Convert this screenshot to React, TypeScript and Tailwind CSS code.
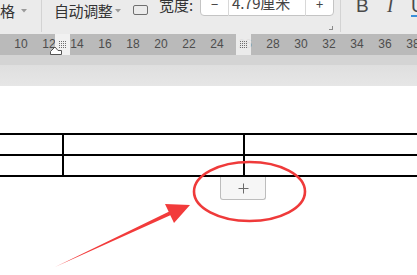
import React from "react";

const cjk = "font-['Noto_Sans_CJK_SC','Noto_Sans',sans-serif]";

function Grid() {
  const dots = [];
  for (let r = 0; r < 4; r++)
    for (let c = 0; c < 4; c++)
      dots.push(<rect key={`${r}-${c}`} x={c * 2} y={r * 2} width="1" height="1" fill="#6e6e6e" />);
  return (
    <svg width="7" height="7" viewBox="0 0 7 7">
      {dots}
    </svg>
  );
}

function Caret() {
  return (
    <svg width="6" height="4" viewBox="0 0 6 4">
      <polygon points="0,0 6,0 3,3.5" fill="#9a9a9a" />
    </svg>
  );
}

export default function App() {
  const nums = [10, 12, 14, 16, 18, 20, 22, 24, 26, 28, 30, 32, 34, 36, 38];
  return (
    <div className={`relative w-[417px] h-[275px] overflow-hidden bg-white ${cjk}`}>
      {/* Toolbar */}
      <div className="h-[34px] bg-[#ebebeb] flex items-start text-[#333]">
        <div className="w-[41px] h-[21px] shrink-0 flex items-center overflow-hidden">
          <span className="text-[15px] leading-[21px] ml-[-15px] whitespace-nowrap">表格</span>
          <span className="ml-[6px] mt-[1px] flex"><Caret /></span>
        </div>
        <div className="w-px h-[32px] bg-[#d3d3d3] shrink-0" />
        <div className="ml-[12px] h-[21px] flex items-center shrink-0">
          <span className="text-[15px] leading-[21px] tracking-[-0.4px] w-[61px] whitespace-nowrap">自动调整</span>
          <span className="w-[9px] mt-[1px] flex"><Caret /></span>
        </div>
        <div className="ml-[9px] mt-[5px] w-[15px] h-[10px] border border-[#6f6f6f] rounded-[2px] shrink-0" />
        <div className="ml-[11px] shrink-0 flex flex-col w-[181px]">
          <div className="flex items-start mt-[-4px]">
            <span className="text-[15px] leading-[18px] w-[40px] whitespace-nowrap">宽度:</span>
            <div className="ml-[1px] w-[134px] h-[20px] bg-white border border-[#c4c4c4] rounded-b-[4px] flex items-center text-[#444]">
              <span className="w-[27px] text-center text-[13px] leading-[14px] mt-[-4px]">−</span>
              <div className="w-px h-[20px] bg-[#d8d8d8]" />
              <span className="ml-[3px] w-[73px] text-[15px] leading-[14px] mt-[-6px] whitespace-nowrap tracking-[-0.2px]">4.79厘米</span>
              <div className="w-px h-[20px] bg-[#d8d8d8]" />
              <span className="flex-1 text-center text-[13px] leading-[14px] mt-[-4px]">+</span>
            </div>
          </div>
          <div className="flex justify-end pr-[7px] mt-[10px]">
            <div className="w-[4px] h-[4px] border-r border-b border-[#8a8a8a]" />
          </div>
        </div>
        <div className="w-px h-[32px] bg-[#d3d3d3] shrink-0" />
        <div className="ml-[15px] flex items-start shrink-0 font-['Liberation_Sans',sans-serif] text-[#4a4a4a]">
          <span className="text-[19px] leading-[19px] mt-[-4px] w-[31px]">B</span>
          <span className="text-[19px] leading-[19px] mt-[-4px] italic w-[24px] font-['Liberation_Serif',serif] font-light">I</span>
          <span className="text-[19px] leading-[19px] mt-[-4px] border-b-2 border-[#3b8fd9] pb-0">U</span>
        </div>
      </div>

      {/* Ruler */}
      <div className="relative h-[21px] bg-[#bababa] flex pl-[7px] font-['Liberation_Sans',sans-serif]">
        {nums.map((n) => (
          <div key={n} className="w-[28px] shrink-0 text-center text-[12px] leading-[21px] text-[#4d4d4d]">
            {n}
          </div>
        ))}
        <div className="absolute left-[55px] top-0 w-[15px] h-[21px] bg-[#f1f1f1] flex items-center justify-center">
          <Grid />
        </div>
        <div className="absolute left-[236px] top-0 w-[15px] h-[21px] bg-[#f1f1f1]/90 flex items-center justify-center">
          <Grid />
        </div>
        <svg className="absolute left-[49px] top-[12px]" width="14" height="10" viewBox="0 0 14 10">
          <polygon points="1.5,8.5 1.5,5.5 6,1 9,4.5 12.5,4.5 12.5,8.5" fill="#fff" stroke="#555" strokeWidth="1" />
        </svg>
      </div>
      <div className="h-[10px] bg-[#d4d4d4]" />
      <div className="h-[21px] bg-gradient-to-b from-[#dfdfdf] to-[#e6e6e6]" />

      {/* Table */}
      <div className="mt-[47px] border-t-2 border-black">
        <div className="flex h-[21px] border-b-2 border-black">
          <div className="w-[64px] border-r-2 border-black" />
          <div className="w-[181px] border-r-2 border-black" />
          <div className="flex-1" />
        </div>
        <div className="flex h-[21px] border-b-2 border-black">
          <div className="w-[64px] border-r-2 border-black" />
          <div className="w-[181px] border-r-2 border-black" />
          <div className="flex-1" />
        </div>
      </div>
      <div className="ml-[220px] w-[46px] h-[23px] border border-t-0 border-[#bdbdbd] rounded-b-[3px] bg-[#f6f6f6] flex items-center justify-center">
        <svg width="11" height="11" viewBox="0 0 11 11">
          <path d="M5.5 0.5V10.5M0.5 5.5H10.5" stroke="#6b6b6b" strokeWidth="1" />
        </svg>
      </div>

      {/* Annotations */}
      <svg className="absolute left-0 top-0 pointer-events-none" width="417" height="275" viewBox="0 0 417 275">
        <ellipse cx="249.5" cy="191.5" rx="55.5" ry="29.5" fill="none" stroke="#ef3a3a" strokeWidth="2.6" />
        <polygon
          points="55,267 168.7,211.7 165,204 190,205 174,223 170.3,215.3"
          fill="#f23b3b"
        />
      </svg>
    </div>
  );
}
